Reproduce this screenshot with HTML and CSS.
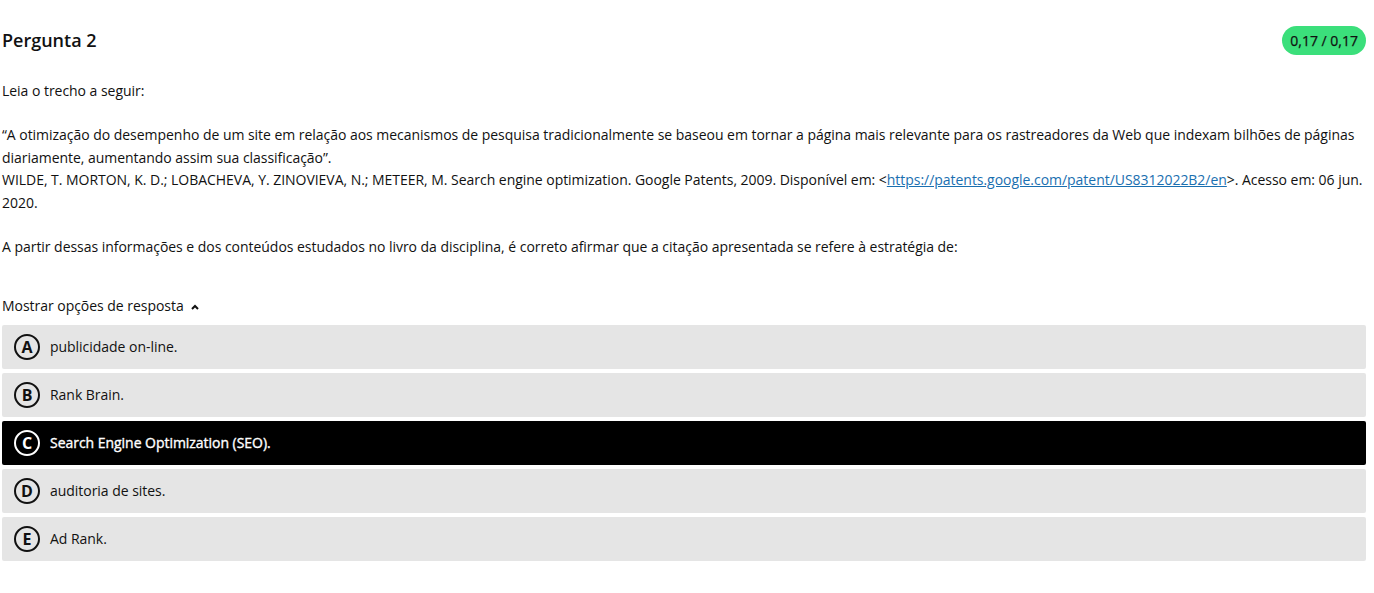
FILE: index.html
```html
<!DOCTYPE html>
<html lang="pt">
<head>
<meta charset="utf-8">
<link rel="stylesheet" href="styles.css">
</head>
<body>
<div class="question">
  <div class="header">
    <h2 class="title">Pergunta 2</h2>
    <span class="score">0,17 / 0,17</span>
  </div>
  <div class="body">
    <p>Leia o trecho a seguir:</p>
    <p>“A otimização do desempenho de um site em relação aos mecanismos de pesquisa tradicionalmente se baseou em tornar a página mais relevante para os rastreadores da Web que indexam bilhões de páginas diariamente, aumentando assim sua classificação”.<br>WILDE, T. MORTON, K. D.; LOBACHEVA, Y. ZINOVIEVA, N.; METEER, M. Search engine optimization. Google Patents, 2009. Disponível em: &lt;<a href="#">https://patents.google.com/patent/US8312022B2/en</a>&gt;. Acesso em: 06 jun. 2020.</p>
    <p>A partir dessas informações e dos conteúdos estudados no livro da disciplina, é correto afirmar que a citação apresentada se refere à estratégia de:</p>
  </div>
  <div class="toggle">Mostrar opções de resposta
    <svg class="chev" width="10" height="8" viewBox="0 0 10 8"><path d="M2 6 L5 3 L8 6" fill="none" stroke="#111" stroke-width="2"/></svg>
  </div>
  <ul class="options">
    <li class="opt"><span class="letter">A</span><span>publicidade on-line.</span></li>
    <li class="opt"><span class="letter">B</span><span>Rank Brain.</span></li>
    <li class="opt selected"><span class="letter">C</span><span>Search Engine Optimization (SEO).</span></li>
    <li class="opt"><span class="letter">D</span><span>auditoria de sites.</span></li>
    <li class="opt"><span class="letter">E</span><span>Ad Rank.</span></li>
  </ul>
</div>
</body>
</html>
```
FILE: styles.css
```css
html, body { margin: 0; padding: 0; background: #fff; }
body {
  font-family: "Open Sans", "Liberation Sans", sans-serif;
  color: #111;
  font-size: 14px;
  letter-spacing: -0.035px;
}
.question { padding: 26px 8px 0 2px; }
.header { display: flex; justify-content: space-between; align-items: center; height: 29px; }
.title { margin: 0; font-size: 18px; font-weight: 600; color: #111; margin-top: -2px; letter-spacing: 0; }
.score {
  background: #3bdf7b;
  color: #111;
  border-radius: 15px;
  height: 29px;
  line-height: 29px;
  padding: 0 8px;
  font-size: 14px;
  letter-spacing: 0;
  -webkit-text-stroke: 0.25px #111;
}
.body { margin-top: 25px; }
.body p { margin: 0 0 22px 0; line-height: 22.4px; }
.body a { color: #1a6fb0; text-decoration: underline; }
.toggle { margin-top: 37px; display: flex; align-items: center; gap: 6px; line-height: 22px; }
.chev { margin-top: 1px; }
.options { list-style: none; margin: 8px 0 0; padding: 0; }
.opt {
  display: flex; align-items: center; gap: 10px;
  height: 44px; background: #e5e5e5; border-radius: 2px;
  margin-bottom: 4px; padding-left: 12px;
}
.opt > span:last-child { margin-top: -2px; }
.letter {
  box-sizing: border-box;
  width: 26px; height: 26px; border: 2px solid #111; border-radius: 50%;
  display: flex; align-items: center; justify-content: center;
  font-weight: 700; font-size: 16px; line-height: 1; letter-spacing: 0;
}
.selected { background: #000; color: #fff; }
.selected > span:last-child { -webkit-text-stroke: 0.35px #fff; }
.selected .letter { border-color: #fff; }
```
